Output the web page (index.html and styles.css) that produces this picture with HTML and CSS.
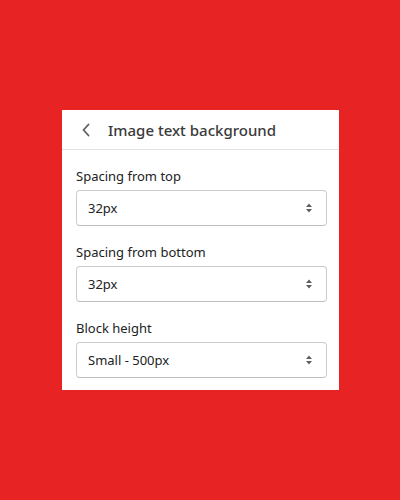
FILE: index.html
```html
<!DOCTYPE html>
<html lang="en">
<head>
    <meta charset="UTF-8">
    <meta name="viewport" content="width=device-width, initial-scale=1.0">
    <title>Image text background</title>
    <link rel="stylesheet" href="styles.css">
</head>
<body>
    <div class="panel">
        <div class="panel-header">
            <span class="back">
                <svg width="8" height="14" viewBox="0 0 8 14"><path d="M6.5 1.5 1.5 7l5 5.5" fill="none" stroke="#5c5f62" stroke-width="1.8" stroke-linecap="round" stroke-linejoin="round"/></svg>
            </span>
            <h1>Image text background</h1>
        </div>

        <div class="panel-body">
            <div class="field">
                <label>Spacing from top</label>
                <div class="select">
                    <span>32px</span>
                    <svg class="arrows" width="8" height="12" viewBox="0 0 8 12"><path d="M4 1.5 7 5H1zM4 10.5 1 7h6z" fill="#5c5f62"/></svg>
                </div>
            </div>
            <div class="field">
                <label>Spacing from bottom</label>
                <div class="select">
                    <span>32px</span>
                    <svg class="arrows" width="8" height="12" viewBox="0 0 8 12"><path d="M4 1.5 7 5H1zM4 10.5 1 7h6z" fill="#5c5f62"/></svg>
                </div>
            </div>
            <div class="field">
                <label>Block height</label>
                <div class="select">
                    <span>Small - 500px</span>
                    <svg class="arrows" width="8" height="12" viewBox="0 0 8 12"><path d="M4 1.5 7 5H1zM4 10.5 1 7h6z" fill="#5c5f62"/></svg>
                </div>
            </div>
        </div>
    </div>
</body>
</html>
```

FILE: styles.css
```css
body {
    margin: 0;
    padding: 110px 0 0 62px;
    background: #e82323;
    height: 500px;
    box-sizing: border-box;
    font-family: 'Noto Sans', 'Open Sans', sans-serif;
    color: #202223;
}
.panel {
    width: 277px;
    background: #fff;
}
.panel-header {
    display: flex;
    align-items: center;
    height: 39px;
    border-bottom: 1px solid #e1e3e5;
    padding-left: 20px;
}
.back {
    display: flex;
    width: 26px;
}
h1 {
    margin: 0;
    font-size: 15px;
    font-weight: 500;
    color: #3a3a3a;
}
.panel-body {
    padding: 16px 12px 12px 14px;
}
.field + .field {
    margin-top: 16px;
}
label {
    display: block;
    font-size: 13px;
    line-height: 20px;
    margin-bottom: 4px;
    color: #202223;
}
.select {
    display: flex;
    align-items: center;
    justify-content: space-between;
    height: 36px;
    box-sizing: border-box;
    border: 1px solid #c9cccf;
    border-bottom-color: #babfc4;
    border-radius: 4px;
    padding: 0 13px 0 11px;
    font-size: 13px;
}
.arrows {
    display: block;
}
```
